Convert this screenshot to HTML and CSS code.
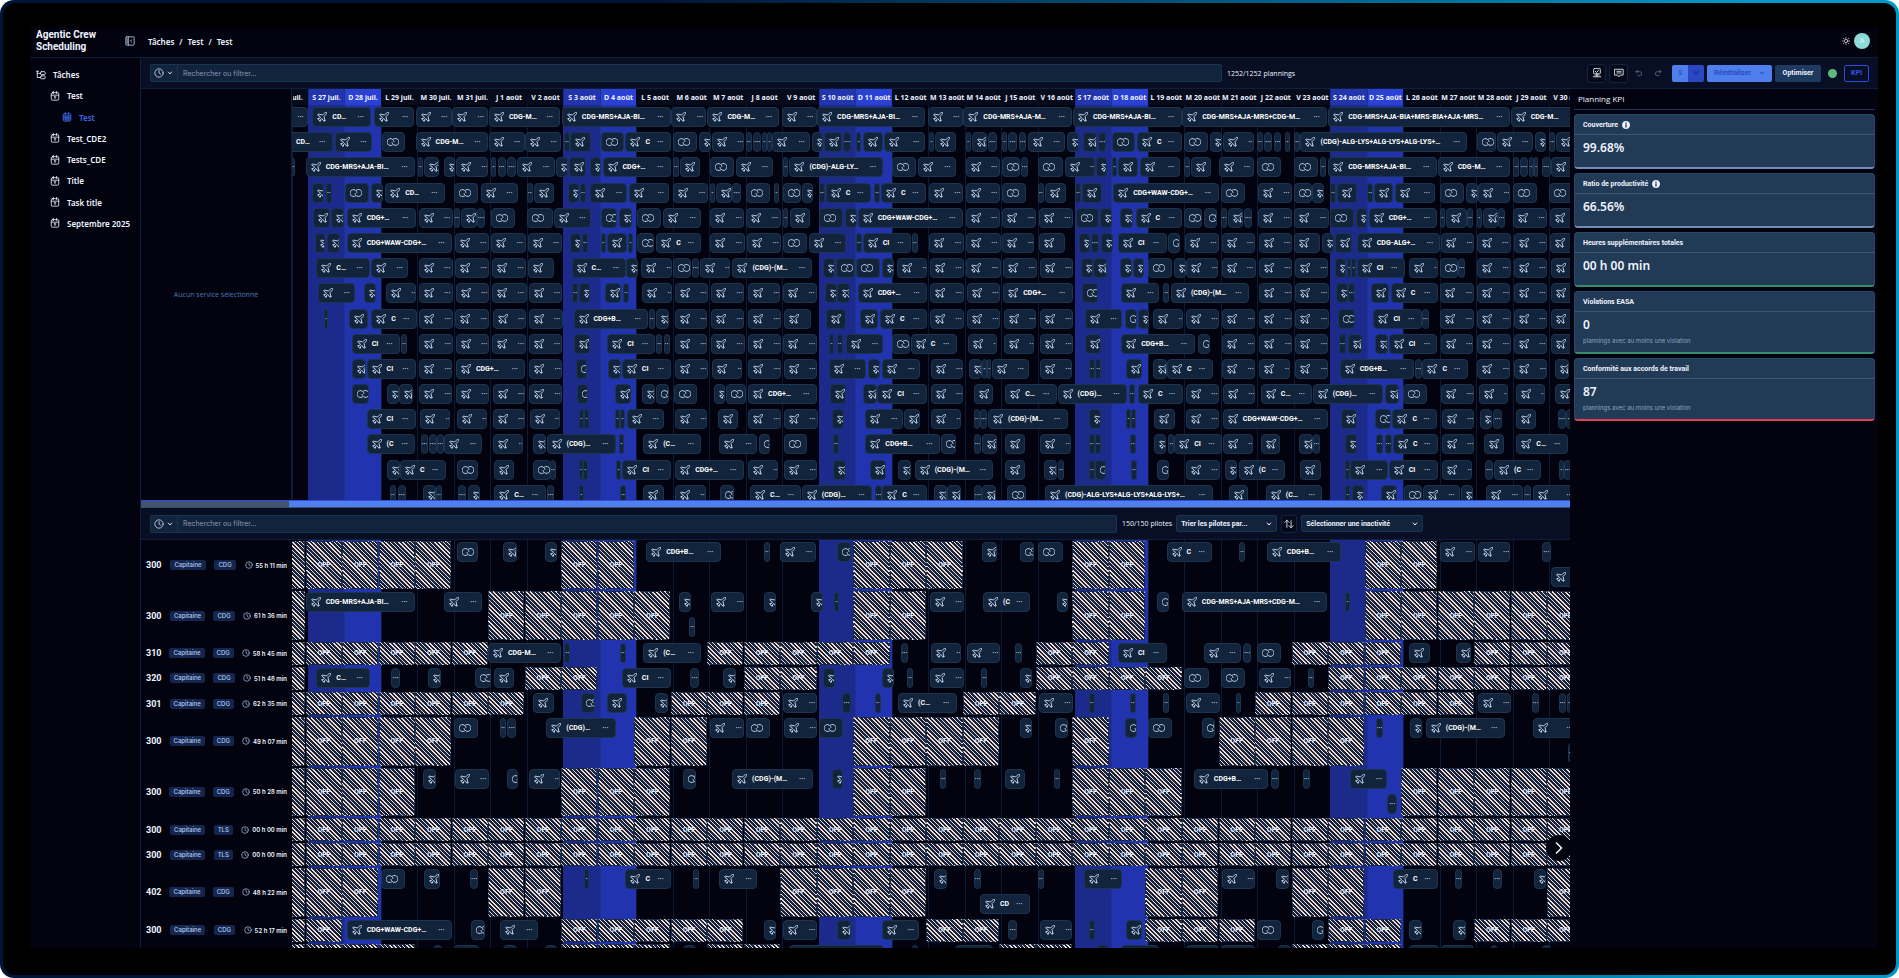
FILE: index.html
```html
<!DOCTYPE html>
<html lang="fr">
<head>
  <meta charset="UTF-8">
  <meta name="viewport" content="width=device-width, initial-scale=1">
  <title>Agentic Crew Scheduling</title>
  <link rel="stylesheet" href="styles.css">
</head>
<body>
  <!-- icon sprite -->
  <svg class="sprite" width="0" height="0" aria-hidden="true">
    <symbol id="i-plane" viewBox="2 2 20 20"><path d="M17.8 19.2 16 11l3.5-3.5C21 6 21.5 4 21 3c-1-.5-3 0-4.5 1.5L13 8 4.8 6.2c-.5-.1-.9.1-1.1.5l-.3.5c-.2.5-.1 1 .3 1.3L9 12l-2 3H4l-1 1 3 2 2 3 1-1v-3l3-2 3.5 5.3c.3.4.8.5 1.3.3l.5-.2c.4-.3.6-.7.5-1.2z"/></symbol>
    <symbol id="i-rings" viewBox="0 0 24 20"><path d="M11 16A7 7 0 1 1 14 9"/><path d="M13 4a7 7 0 1 1-3 7"/></symbol>
    <symbol id="i-clock" viewBox="0 0 24 24"><circle cx="12" cy="12" r="10"/><path d="M12 6v6l4 3"/></symbol>
    <symbol id="i-down" viewBox="0 0 24 24"><path d="M5 8l7 8 7-8"/></symbol>
    <symbol id="i-cal" viewBox="0 0 24 24"><rect x="3" y="4" width="18" height="18" rx="3"/><path d="M3 10h18M8 1v5M16 1v5M12 14v4M10 14h4"/></symbol>
    <symbol id="i-calgrid" viewBox="0 0 24 24"><rect x="3" y="4" width="18" height="18" rx="3"/><path d="M3 9h18M3 13h18M3 17h18M8 1v5M16 1v5M8 10v11M12 10v11M16 10v11"/></symbol>
    <symbol id="i-tree" viewBox="0 0 24 24"><path d="M1 3h5M3 3v15h8M3 8h8"/><rect x="11" y="4" width="11" height="7" rx="2"/><rect x="11" y="14" width="11" height="7" rx="2"/></symbol>
    <symbol id="i-panel" viewBox="0 0 24 24"><rect x="2" y="2" width="20" height="20" rx="2"/><path d="M8 2v20M5 6v12M16 9l-3 3 3 3"/></symbol>
    <symbol id="i-server" viewBox="0 0 24 24"><rect x="4" y="1" width="16" height="13" rx="2"/><path d="M8 8l3 3 5-6M7 17h10M12 14v7M3 21h18"/></symbol>
    <symbol id="i-msg" viewBox="0 0 24 24"><path d="M2 3h20v14h-7l-3 4-3-4H2zM7 8h10M7 12h10"/></symbol>
    <symbol id="i-undo" viewBox="0 0 24 24"><path d="M8 3 3 8l5 5M3 8h11a6 6 0 0 1 0 12H9"/></symbol>
    <symbol id="i-redo" viewBox="0 0 24 24"><path d="M16 3l5 5-5 5M21 8H10a6 6 0 0 0 0 12h5"/></symbol>
    <symbol id="i-swap" viewBox="0 0 24 24"><path d="M7 20V3M2 8l5-5 5 5M17 4v17M12 16l5 5 5-5"/></symbol>
    <symbol id="i-sun" viewBox="0 0 24 24"><circle cx="12" cy="12" r="5"/><path d="M12 1v3M12 20v3M1 12h3M20 12h3M4 4l2 2M18 18l2 2M20 4l-2 2M6 18l-2 2"/></symbol>
    <symbol id="i-next" viewBox="0 0 24 24"><path d="M7 2l10 10L7 22"/></symbol>
    <symbol id="i-info" viewBox="0 0 24 24"><circle cx="12" cy="12" r="11" fill="currentColor"/><path d="M12 11v7M12 6v1" stroke="#223b57" stroke-width="4"/></symbol>
  </svg>

  <div class="frame">
    <div class="screen">
      <div class="app">
        <header class="header">
          <h1 class="brand">Agentic Crew Scheduling</h1>
          <button class="icon-btn collapse" aria-label="Réduire le menu"><svg class="icon icon-md"><use href="#i-panel"/></svg></button>
          <nav class="crumbs"><a href="#">Tâches</a><span>/</span><a href="#">Test</a><span>/</span><a href="#">Test</a></nav>
          <div class="account">
            <button class="icon-btn" aria-label="Thème"><svg class="icon icon-sm"><use href="#i-sun"/></svg></button>
            <span class="avatar">A</span>
          </div>
        </header>

        <aside class="sidebar">
          <ul class="menu">
            <li><a class="root" href="#"><svg class="icon icon-md"><use href="#i-tree"/></svg>Tâches</a></li>
            <li><a href="#"><svg class="icon icon-md"><use href="#i-cal"/></svg>Test</a></li>
            <li><a class="child active" href="#"><svg class="icon icon-md"><use href="#i-calgrid"/></svg>Test</a></li>
            <li><a href="#"><svg class="icon icon-md"><use href="#i-cal"/></svg>Test_CDE2</a></li>
            <li><a href="#"><svg class="icon icon-md"><use href="#i-cal"/></svg>Tests_CDE</a></li>
            <li><a href="#"><svg class="icon icon-md"><use href="#i-cal"/></svg>Title</a></li>
            <li><a href="#"><svg class="icon icon-md"><use href="#i-cal"/></svg>Task title</a></li>
            <li><a href="#"><svg class="icon icon-md"><use href="#i-cal"/></svg>Septembre 2025</a></li>
          </ul>
        </aside>

        <main class="main">
          <div class="toolbar toolbar-top">
            <div class="search">
              <button class="search-mode" aria-label="Filtre horaire"><svg class="icon icon-md"><use href="#i-clock"/></svg><svg class="icon icon-xs"><use href="#i-down"/></svg></button>
              <input type="text" placeholder="Rechercher ou filtrer..." aria-label="Rechercher un planning">
            </div>
            <span class="count">1252/1252 plannings</span>
            <div class="tools">
              <button class="square" aria-label="Sauvegarder"><svg class="icon icon-md"><use href="#i-server"/></svg></button>
              <button class="square" aria-label="Commentaires"><svg class="icon icon-md"><use href="#i-msg"/></svg></button>
              <button class="icon-btn history" aria-label="Annuler"><svg class="icon icon-sm"><use href="#i-undo"/></svg></button>
              <button class="icon-btn history" aria-label="Rétablir"><svg class="icon icon-sm"><use href="#i-redo"/></svg></button>
              <div class="toggle"><button class="on">S</button><button>M</button></div>
              <button class="btn btn-reset">Réinitialiser<svg class="icon icon-xs"><use href="#i-down"/></svg></button>
              <button class="btn btn-optim">Optimiser</button>
              <span class="dot"></span>
              <button class="btn btn-kpi">KPI</button>
            </div>
          </div>

          <div class="workspace">
            <div class="panes">
              <section class="pane">
                <div class="side empty">Aucun service sélectionné</div>
                <div class="timeline with-head">
                  <div class="days head" id="head"></div>
                  <div class="days back" id="back-top"></div>
                  <div class="rows rows-top" id="rows-top"></div>
                </div>
              </section>
              <div class="splitter"></div>
              <div class="toolbar">
                <div class="search search-pilots">
                  <button class="search-mode" aria-label="Filtre horaire"><svg class="icon icon-md"><use href="#i-clock"/></svg><svg class="icon icon-xs"><use href="#i-down"/></svg></button>
                  <input type="text" placeholder="Rechercher ou filtrer..." aria-label="Rechercher un pilote">
                </div>
                <span class="count">150/150 pilotes</span>
                <div class="picker picker-sort">
                  <select aria-label="Tri"><option>Trier les pilotes par...</option></select>
                  <svg class="icon icon-xs"><use href="#i-down"/></svg>
                </div>
                <button class="square small" aria-label="Inverser le tri"><svg class="icon icon-md"><use href="#i-swap"/></svg></button>
                <div class="picker picker-idle">
                  <select aria-label="Inactivité"><option>Sélectionner une inactivité</option></select>
                  <svg class="icon icon-xs"><use href="#i-down"/></svg>
                </div>
              </div>
              <section class="pane">
                <div class="side pilots" id="pilots"></div>
                <div class="timeline">
                  <div class="days back" id="back-bottom"></div>
                  <div class="rows rows-bottom" id="rows-bottom"></div>
                  <button class="next" aria-label="Suivant"><svg class="icon icon-lg"><use href="#i-next"/></svg></button>
                </div>
              </section>
            </div>

            <aside class="kpis">
              <h2>Planning KPI</h2>
              <article class="kpi">
                <h3>Couverture <svg class="icon icon-sm"><use href="#i-info"/></svg></h3>
                <p class="value">99.68%</p>
              </article>
              <article class="kpi">
                <h3>Ratio de productivité <svg class="icon icon-sm"><use href="#i-info"/></svg></h3>
                <p class="value">66.56%</p>
              </article>
              <article class="kpi good">
                <h3>Heures supplémentaires totales</h3>
                <p class="value">00 h 00 min</p>
              </article>
              <article class="kpi good">
                <h3>Violations EASA</h3>
                <p class="value">0</p>
                <p class="note">plannings avec au moins une violation</p>
              </article>
              <article class="kpi bad">
                <h3>Conformité aux accords de travail</h3>
                <p class="value">87</p>
                <p class="note">plannings avec au moins une violation</p>
              </article>
            </aside>
          </div>
        </main>
      </div>
    </div>
  </div>
  <script src="app.js"></script>
</body>
</html>
```
FILE: styles.css
```css
* {
  box-sizing: border-box;
}
body {
  margin: 0;
  background: #fff;
  color: #eef3ff;
  font-family: "Noto Sans", sans-serif;
  font-size: 8px;
}
h1, h2, h3, p, ul {
  margin: 0;
  padding: 0;
}
a {
  color: inherit;
  text-decoration: none;
}
button, input, select {
  font-family: Roboto, sans-serif;
  font-size: 7px;
  color: inherit;
  margin: 0;
  padding: 0;
  border: 0;
  background: none;
}
button {
  cursor: pointer;
}
.sprite {
  display: block;
}

/* icons */
.icon {
  flex: none;
  width: 10px;
  height: 10px;
  fill: none;
  stroke: currentColor;
  stroke-width: 2;
  stroke-linecap: round;
  stroke-linejoin: round;
}
.icon-xs {
  width: 6px;
  height: 6px;
  stroke-width: 4;
}
.icon-sm {
  width: 8px;
  height: 8px;
}
.icon-lg {
  width: 12px;
  height: 12px;
  stroke-width: 3;
}
.icon-btn {
  display: flex;
}

/* device frame */
.frame {
  height: 100vh;
  padding: 3px;
  border-radius: 14px;
  background: linear-gradient(to right, #001638 35%, #0098c6 92%);
}
.screen {
  height: 100%;
  padding: 24px 18px 27px 27px;
  border-radius: 12px;
  background: #000;
}
.app {
  height: 100%;
  display: grid;
  grid-template: 31px minmax(0, 1fr) / 111px minmax(0, 1fr);
  background: #02030e;
}

/* header */
.header {
  grid-column: 1 / -1;
  display: flex;
  align-items: center;
  padding: 0 8px 2px 6px;
  border-bottom: 1px solid #0d1f3d;
}
.brand {
  width: 89px;
  font: 700 10px/12px Roboto, sans-serif;
}
.collapse {
  color: #b9cbe8;
}
.crumbs {
  display: flex;
  gap: 5px;
  margin-left: 13px;
  font-weight: 600;
}
.account {
  display: flex;
  align-items: center;
  gap: 4px;
  margin-left: auto;
}
.avatar {
  width: 16px;
  height: 16px;
  border-radius: 50%;
  background: #8cd9da;
  font-size: 7px;
  line-height: 16px;
  text-align: center;
}

/* sidebar */
.sidebar {
  border-right: 1px solid #0d1f3d;
}
.menu {
  display: grid;
  grid-auto-rows: 1fr;
  height: 170px;
  margin-top: 6px;
  list-style: none;
  font-weight: 600;
}
.menu a {
  display: flex;
  align-items: center;
  gap: 7px;
  height: 100%;
  padding-left: 20px;
  white-space: nowrap;
}
.menu .root {
  padding-left: 6px;
}
.menu .child {
  padding-left: 32px;
}
.menu .active {
  color: #3f66e8;
}

/* toolbar */
.main {
  display: flex;
  flex-direction: column;
  min-width: 0;
}
.toolbar {
  display: flex;
  align-items: center;
  gap: 4px;
  height: 32px;
  padding: 0 9px;
  background: #080e24;
  border-bottom: 1px solid #0d1f3d;
}
.toolbar-top {
  height: 31px;
  flex: none;
}
.search {
  display: flex;
  flex: 0 1 1072px;
  height: 18px;
  border: 1px solid #193453;
  border-radius: 2px;
  background: #12243b;
}
.search-pilots {
  flex-basis: 967px;
}
.search-mode {
  display: flex;
  align-items: center;
  gap: 3px;
  width: 27px;
  padding-left: 3px;
  border-right: 1px solid #193453;
  color: #c9d8ef;
}
.search input {
  flex: 1;
  min-width: 0;
  padding: 0 5px;
  outline: 0;
  font-family: Inter, sans-serif;
}
.search input::placeholder {
  color: #8599b8;
}
.count {
  margin-left: 1px;
  font-family: "Open Sans", sans-serif;
  font-size: 7px;
  white-space: nowrap;
}
.tools {
  display: flex;
  align-items: center;
  gap: 3px;
  margin-left: auto;
}
.square {
  display: flex;
  align-items: center;
  justify-content: center;
  width: 19px;
  height: 19px;
  border: 1px solid #14243d;
  border-radius: 3px;
  background: #050918;
}
.square.small {
  width: 16px;
  height: 18px;
}
.history {
  width: 16px;
  justify-content: center;
  color: #71849f;
}
.toggle {
  display: flex;
  margin-left: 3px;
  border-radius: 2px;
  overflow: hidden;
}
.toggle button {
  width: 16px;
  height: 17px;
  background: #2a48c4;
  color: #18329c;
}
.toggle .on {
  background: #4f7fec;
  color: #2546c4;
}
.btn {
  height: 17px;
  border-radius: 2px;
  font-weight: 700;
}
.btn-reset {
  display: flex;
  align-items: center;
  justify-content: space-between;
  width: 65px;
  padding: 0 7px;
  background: #4f7fec;
  color: #2546c4;
  font-weight: 500;
}
.btn-optim {
  width: 46px;
  background: #1f3a60;
}
.dot {
  width: 9px;
  height: 9px;
  margin: 0 4px;
  border-radius: 50%;
  background: #5fb87d;
}
.btn-kpi {
  width: 25px;
  border: 1px solid #2a4be0;
  color: #2f55f0;
}
.picker {
  display: grid;
  align-items: center;
  height: 17px;
  border: 1px solid #193453;
  border-radius: 2px;
  background: #12243b;
}
.picker-sort {
  width: 101px;
}
.picker-idle {
  width: 122px;
}
.toolbar .picker,
.toolbar .square {
  flex: none;
}
.picker select,
.picker .icon {
  grid-area: 1 / 1;
}
.picker select {
  appearance: none;
  width: 100%;
  padding: 0 4px;
  font-weight: 700;
}
.picker .icon {
  justify-self: end;
  margin-right: 4px;
  pointer-events: none;
}

/* workspace */
.workspace {
  flex: 1;
  min-height: 0;
  display: grid;
  grid-template-columns: minmax(0, 1fr) 308px;
}
.panes {
  display: grid;
  grid-template-rows: 411px 8px 32px minmax(0, 1fr);
  min-height: 0;
}
.pane {
  display: grid;
  grid-template: minmax(0, 1fr) / 151px minmax(0, 1fr);
  min-height: 0;
  overflow: hidden;
}
.splitter {
  border-top: 1px solid #2f4be0;
  border-bottom: 1px solid #3a4d70;
  background: linear-gradient(to right, #44546f 148px, #4f80ee 148px);
}
.side {
  overflow: hidden;
}
.empty {
  display: flex;
  align-items: center;
  justify-content: center;
  border-right: 1px solid #0d1f3d;
  color: #4a78b8;
  font-family: "Open Sans", sans-serif;
  font-size: 7px;
}

/* timeline */
.timeline {
  display: grid;
  grid-template: minmax(0, 1fr) / minmax(0, 1fr);
  overflow: hidden;
  position: relative;
}
.timeline.with-head {
  grid-template-rows: 16px minmax(0, 1fr);
}
.days {
  display: grid;
  grid-template-columns: 43fr repeat(34, 100fr) 57fr;
}
.head {
  background: #060b1c;
}
.day {
  min-width: 0;
  overflow: hidden;
  border-left: 1px solid #0b1b36;
  display: flex;
  justify-content: center;
  align-items: center;
  font-size: 7px;
  font-weight: 700;
  white-space: nowrap;
}
.head .day {
  border-color: transparent;
}
.head .day:first-child {
  justify-content: flex-end;
  padding-right: 5px;
}
.head .day:last-child {
  justify-content: flex-start;
  padding-left: 3px;
}
.day.sat {
  background: #1c2a8c;
  border-color: #1c2a8c;
}
.day.sun {
  background: #2233b0;
  border-color: #1b3390;
}
.head .sat {
  background: #2335ac;
}
.head .sun {
  background: #2b40d4;
}
.back,
.rows {
  grid-column: 1;
  grid-row: -2 / -1;
}
.rows {
  display: grid;
  align-self: start;
}
.rows-top {
  height: 403px;
  grid-template-rows: repeat(16, 1fr);
}
.rows-bottom,
.pilots {
  height: 428px;
  display: grid;
  grid-template-rows: repeat(17, 1fr);
}
.row {
  position: relative;
  min-height: 0;
}
.tall {
  grid-row: span 2;
}

/* bars sit at their start time along the row */
.bar {
  position: absolute;
  top: 2px;
  height: 20px;
  display: flex;
  align-items: center;
  padding: 0 4px;
  border: 1px solid #1b3550;
  border-radius: 4px;
  background: #12243b;
  color: #bccfe9;
  overflow: hidden;
}
.bar.lane2 {
  top: 27px;
}
.bar .more {
  flex: none;
  width: 7px;
  margin-left: auto;
  padding-left: 10px;
  box-sizing: content-box;
  font: 700 7px/8px Roboto, sans-serif;
  text-align: center;
}
.bar.named {
  padding-right: 6px;
}
.bar.named .more {
  padding-left: 0;
}
.bar.tiny {
  justify-content: center;
  padding: 0;
}
.bar.tiny .more {
  margin: 0;
  padding: 0;
}
.bar .label {
  margin-left: 5px;
  color: #fff;
  font: 700 7px/10px Roboto, sans-serif;
  white-space: nowrap;
}
.bar .rings {
  width: 12px;
}
.off {
  position: absolute;
  top: 1px;
  bottom: 1px;
  display: flex;
  align-items: center;
  justify-content: center;
  border: 1px dashed #16304d;
  border-radius: 2px;
  background: repeating-linear-gradient(45deg, #f3dccb 0 1px, #14223f 1px 3px);
  color: #e2edff;
  font: 700 7px/8px Roboto, sans-serif;
}
.next {
  position: absolute;
  right: -2px;
  bottom: 87px;
  display: flex;
  align-items: center;
  justify-content: center;
  width: 26px;
  height: 26px;
  border-radius: 50%;
  background: #02030e;
  color: #fff;
}

/* pilots */
.pilot {
  display: flex;
  align-items: center;
  justify-content: space-between;
  padding: 0 5px;
  min-height: 0;
  font-family: Inter, sans-serif;
}
.pilot b {
  font: 700 9px Roboto, sans-serif;
}
.tag {
  padding: 0 4px;
  border-radius: 2px;
  background: #14264e;
  color: #b4ccf2;
  font-size: 6px;
  font-weight: 500;
  line-height: 10px;
}
.hours {
  display: flex;
  align-items: center;
  gap: 3px;
  font-size: 6px;
  font-weight: 600;
}
.hours .icon {
  color: #b4ccf2;
}

/* kpi */
.kpis {
  padding: 0 3px 0 4px;
}
.kpis h2 {
  height: 21px;
  margin-bottom: 4px;
  padding-left: 4px;
  border-bottom: 1px solid #1d3450;
  font: 400 8px/20px "Open Sans", sans-serif;
}
.kpi {
  height: 55px;
  margin-bottom: 4px;
  border: 1px solid #27486a;
  border-bottom: 2px solid #7489b4;
  border-radius: 4px;
  background: #213a56;
}
.kpi:has(.note) {
  height: 63px;
}
.kpi h3 {
  display: flex;
  align-items: center;
  gap: 4px;
  height: 20px;
  padding-left: 8px;
  border-bottom: 1px solid #3a5775;
  font: 700 7px Roboto, sans-serif;
}
.kpi .value {
  padding-left: 8px;
  font-size: 12px;
  font-weight: 600;
  line-height: 26px;
}
.kpi .note {
  padding-left: 8px;
  color: #8fa3c0;
  font: 400 6px/6px Inter, sans-serif;
}
.kpi.good {
  border-bottom-color: #3a8a6e;
}
.kpi.bad {
  border-bottom-color: #e2405a;
}
```
FILE: app.js
```js
// The visible window is 35 days long; times are given in ticks from its left edge.
const WINDOW = 3836;
const DAY = WINDOW / 35;
const OFF_START = 41;

const LETTERS = ['S', 'D', 'L', 'M', 'M', 'J', 'V'];

// "start,end,label" per bar, a leading "o" marks a ground duty
const PLANNINGS = [
  '-60,48 61,238,CD… 245,365 371,479 481,589 591,805,CDG-M… 810,1137,CDG-MRS+AJA-BI… 1139,1244 1247,1463,CDG-M… 1470,1575 1576,1901,CDG-MRS+AJA-BI… 1908,2013 2015,2342,CDG-MRS+AJA-M… 2344,2670,CDG-MRS+AJA-BI… 2672,3107,CDG-MRS+AJA-MRS+CDG-M… 3110,3656,CDG-MRS+AJA-BIA+MRS-BIA+AJA-MRS… 3658,3880,CDG-M…',
  '-48,122,CD… 129,240 o269,340 371,588,CDG-M… 590,698 700,807 817,833 835,897 o926,997 1001,1137,C o1144,1216 1223,1257 1260,1356 1364,1380 1384,1408 1411,1425 1425,1440 1442,1555 1561,1594 1597,1650 1653,1678 1693,1709 1713,1773 1777,1899 1912,1927 1931,1993 2022,2037 2041,2087 2088,2115 2131,2145 2150,2175 2183,2202 2210,2320 2327,2361 2373,2417 2419,2444 o2460,2531 2536,2670,C o2678,2750 2754,2792 2794,2889 2898,2914 2917,2943 2947,2969 2980,2997 3007,3025 3027,3528,(CDG)-ALG-LYS+ALG-LYS+ALG-LYS+… o3556,3614 3616,3726 3731,3764 3773,3791 3795,3860',
  '-15,10 41,369,CDG-MRS+AJA-BI… 378,394 397,442 456,490 492,588 597,613 617,641 646,672 676,788 792,827 830,881 893,929 932,1137,CDG+… 1144,1163 1166,1225 o1254,1326 1332,1445 1474,1490 1493,1775,(CDG)-ALG-LY… o1802,1873 1880,1993 2022,2124 o2130,2185 2188,2208 o2240,2313 2319,2411 2414,2447 2460,2475 2479,2540 2545,2664 2678,2695 2699,2759 2781,2889 o2897,2969 o3007,3079 3086,3103 3110,3436,CDG-MRS+AJA-BI… 3439,3655,CDG-M… 3664,3682 3686,3709 3713,3727 3727,3741 3751,3778 3780,3870',
  '61,95 102,121 o158,231 236,273 280,459,CD… o487,559 566,678 706,724 726,787 828,862 865,881 894,1007 1012,1132 1145,1248 1254,1271 1274,1321 1322,1347 o1364,1435 1446,1462 o1474,1528 1531,1563 1583,1599 1602,1737,C 1747,1765 1768,1903,C 1912,2015 2022,2124 o2131,2203 2240,2257 2261,2322 2351,2367 2371,2431 2465,2781,CDG+WAW-CDG+… o2788,2860 2899,3002 o3008,3061 3063,3097 3116,3133 3136,3197 3226,3244 3247,3306 3312,3432 o3446,3517 3523,3559 3560,3657 o3664,3736 o3774,3846',
  '64,115 118,155 164,371,CDG+… 380,482 486,505 507,554 554,580 o597,669 o706,782 785,897 o926,975 981,1021 o1036,1107 1114,1228 1255,1358 1364,1468 1474,1490 1494,1554 o1583,1653 1661,1695 1698,2013,CDG+WAW-CDG+… 2022,2124 2132,2233 2242,2344 o2352,2421 2425,2461 2485,2525 2532,2672,C o2678,2731 o2737,2776 2788,2805 2808,2856 2857,2881 2900,3002 3009,3112 o3116,3188 3194,3228 3232,3438,CDG+… 3445,3462 3465,3527 3527,3545 3556,3572 3575,3619 3621,3640 3665,3767 3775,3877',
  '68,100 104,143 164,480,CDG+WAW-CDG+… 488,592 598,702 707,811 833,868 870,888 926,942 946,1005 1008,1025 o1036,1087 1093,1228,C 1255,1359 1366,1468 o1474,1545 1552,1664 1693,1710 1713,1858,CI 1861,1880 1913,2017 2023,2127 2132,2227 2242,2320 2361,2395 2397,2422 2427,2465 2479,2625,CI o2628,2665 2680,2782 2790,2891 2901,3002 3009,3087 3092,3127 3130,3182 3196,3447,CDG-ALG+… 3449,3547 3556,3658 3667,3768 3777,3879',
  '73,235,C… 238,349 380,483 490,592 600,702 707,787 839,1004,C… 1004,1040 1047,1140 o1145,1198 1202,1222 1224,1315 1322,1562,(CDG)-(M… 1595,1630 o1632,1690 o1693,1765 1770,1807 1817,1906 1915,2017 2024,2127 2135,2237 2244,2343 2369,2403 2405,2445 2485,2522 2523,2558 o2569,2640 2647,2683 2684,2780 2790,2893 2902,3002 3011,3111 3130,3165 3166,3179 3179,3193 3196,3340,CI 3352,3440 o3446,3500 3501,3520 3557,3660 3667,3767 3778,3880',
  '78,190 217,253 283,373 381,482 491,592 601,704 710,810 840,857 860,896 939,989 993,1012 1051,1140 1149,1250 1258,1356 1369,1465 1474,1577 1601,1635 1637,1674 1698,1906,CDG+… 1916,2017 2025,2125 2135,2343,CDG+… o2370,2420 2488,2602 2613,2632 2638,2872,(CDG)-(M… 2903,3003 3012,3112 3135,3171 3171,3190 3240,3294 3298,3439,C 3447,3549 3558,3657 3667,3767 3778,3880',
  '95,109 172,227 238,374,C 382,482 490,592 602,702 710,812 845,1069,CDG+B… 1073,1091 1093,1132 1149,1247 1258,1356 1369,1467 1476,1558 1602,1663 1706,1759 1765,1905,C 1915,2017 2026,2125 2136,2232 2244,2343 2379,2491 o2500,2536 2538,2573 2585,2673 2683,2783 2792,2891 2903,3002 3012,3112 o3139,3190 3246,3391,CI 3393,3414 3447,3549 3558,3658 3667,3768 3778,3880',
  '179,324,CI 326,346 382,483 491,592 601,703 710,811 847,896 946,1091,CI 1092,1110 1118,1136 1149,1246 1258,1359 1369,1468 1475,1576 1611,1628 1637,1655 1662,1775 o1802,1856 1857,1995,C 2029,2117 2137,2226 2245,2343 2381,2429 2489,2709,CDG+B… o2719,2755 2792,2890 2904,3001 3012,3110 3144,3165 3170,3212 3250,3289 3292,3438,CI 3448,3546 3558,3660 3667,3767 3778,3880',
  '181,221 224,372,CI 382,481 492,700,CDG+… 712,810 o852,887 948,988 990,1138,CI 1149,1250 1261,1351 1370,1467 1476,1576 1611,1723 1728,1765 1771,1884 1917,2014 2033,2070 2071,2085 2085,2099 2100,2213 2245,2342 2391,2409 2409,2428 2502,2550 2585,2625 2626,2763,C 2792,2892 2904,2995 3012,3109 3145,3367,CDG+B… 3372,3392 3393,3529,C 3558,3657 3669,3766 3790,3833',
  'o181,232 285,321 322,364 382,480 492,591 602,700 711,810 o856,888 968,1018 1052,1091 o1092,1132 o1147,1217 1267,1301 o1304,1363 1369,1575,CDG+… 1614,1662 1715,1755 1757,1905,CI 1917,2014 2046,2105 2141,2295,C… 2298,2506,(CDG)… 2513,2531 2539,2673,C 2683,2782 2794,2892 2908,3062,C… 3064,3274,(CDG)… 3281,3322 o3336,3408 3450,3549 3562,3651 3673,3762 3792,3850',
  '224,371,CI 385,475 494,584 602,699 713,804 861,875 875,893 970,985 985,1001 1005,1117 1150,1247 1279,1339 1369,1468 1476,1578 1620,1656 1721,1833 1837,1885 1918,2008 2047,2066 2066,2085 2089,2328,(CDG)-(M… 2393,2429 2504,2519 2519,2533 2588,2649 2683,2781 2794,3109,CDG+WAW-CDG+… 3148,3196 o3252,3300 3303,3437,C 3451,3549 3566,3603 3605,3631 3675,3733 3800,3823 3825,3850',
  '224,370,(C 388,408 410,434 436,456 457,569 604,693 723,762 764,972,(CDG)… 981,998 1054,1228,(C… 1282,1396 o1403,1436 o1477,1545 1624,1642 1721,1945,CDG+B… o1948,1994 2048,2068 2070,2116 2141,2199 2246,2338 2393,2410 2410,2428 2516,2534 2588,2623 2628,2646 2648,2791,CI 2794,2885 2908,2965 3023,3065 3066,3085 3160,3196 3253,3276 3282,3301 3305,3439,C 3451,3549 3579,3639 3675,3829,C…',
  '286,323 324,461,C o496,559 607,665 o724,776 775,793 861,874 874,887 971,989 992,1138,CI 1150,1356,CDG+… 1370,1460 1477,1576 1625,1662 1734,1783 1818,1859 1869,2105,(CDG)-(M… 2141,2199 2256,2296 2298,2317 2393,2409 o2410,2442 2518,2536 o2595,2633 2683,2784 2800,2836 2842,2982,(C 3025,3088 3162,3175 3177,3289 3292,3439,CI 3452,3542 3582,3604 3608,3748,(C 3802,3818 3818,3840',
  '294,313 317,341 394,432 432,450 497,523 529,564 607,761,C… 765,785 861,876 985,1002 1054,1117 1149,1242 o1284,1328 1375,1529,C… 1530,1741,(CDG)… 1751,1770 1772,1905,C 1928,1965 1966,2008 2048,2070 2072,2113 o2145,2203 2260,2763,(CDG)-ALG-LYS+ALG-LYS+ALG-LYS+… 2812,2871 2923,3092,(C… 3161,3175 3181,3217 3269,3318 o3337,3392 3394,3506 3508,3544 3583,3696 3699,3720 3724,3860',
];

// off: ranges of day indexes, 0 is the first Saturday
const PILOTS = [
  { id: 300, base: 'CDG', hours: '55 h 11 min', tall: true, off: '-1,3 7,8 15,17 21,22 29,30',
    bars: 'o496,559 633,674 760,796 1063,1287,CDG+B… 1417,1435 1466,1574 o1637,1678 2071,2117 o2185,2227 o2239,2313 2625,2762,C 2842,2861 2926,3148,CDG+B… 3447,3550 3559,3657 3751,3779', lane2: '3778,3880' },
  { id: 300, base: 'CDG', hours: '61 h 36 min', tall: true, off: '-1,-1 5,9 15,16 21,22 29,34',
    bars: '41,369,CDG-MRS+AJA-BI… 455,570 1161,1198 1259,1356 1418,1454 1559,1594 1628,1642 1915,2017 2074,2215,(C 2296,2330 o2595,2633 2671,3108,CDG-MRS+AJA-MRS+CDG-M… 3162,3175', lane2: '1191,1209' },
  { id: 310, base: 'CDG', hours: '58 h 45 min', off: '-1,4 11,15 20,21 27,29 32,34',
    bars: '588,807,CDG-M… 815,833 985,1003 1054,1228,(C… 1828,1848 1918,2008 2026,2124 2170,2191 2479,2625,CI 2737,2848 2854,2880 o2897,2970 3354,3417 3493,3538' },
  { id: 320, base: 'CDG', hours: '51 h 48 min', off: '-1,-1 6,7 12,13 20,23 28,34',
    bars: '73,235,C… 298,325 409,446 o550,597 607,665 990,1138,CI 1194,1222 1294,1332 1595,1631 1770,1807 1847,1863 1915,2016 2067,2086 2185,2221 o2678,2751 o2788,2860 2902,3000 3051,3068' },
  { id: 301, base: 'CDG', hours: '62 h 35 min', off: '-1,5 10,12 18,19 26,31',
    bars: '724,787 o867,910 944,1005 1090,1129 1475,1577 1651,1678 1750,1769 1819,1995,(C… 2242,2343 2393,2410 2516,2534 2614,2633 2683,2784 2833,2848 3559,3658 3722,3742 3804,3824 3826,3845' },
  { id: 300, base: 'CDG', hours: '49 h 07 min', tall: true, off: '-1,3 9,10 15,18 21,21 25,28',
    bars: 'o487,559 625,642 646,673 763,972,(CDG)… 1255,1357 o1363,1435 1477,1576 o1583,1654 2185,2221 o2290,2330 o2500,2536 o2568,2640 o2732,2769 3253,3275 3355,3391 3403,3640,(CDG)-(M… 3724,3860', lane2: '3829,3850' },
  { id: 300, base: 'CDG', hours: '50 h 28 min', tall: true, off: '-1,2 7,9 15,16 21,23 30,34',
    bars: '394,431 488,592 o646,679 712,803 o1175,1214 1321,1563,(CDG)-(M… 1620,1655 1944,1963 2047,2068 2141,2199 2287,2305 2707,2929,CDG+B… 2938,2962 3034,3057 3177,3288', lane2: '3288,3316' },
  { id: 300, base: 'TLS', hours: '00 h 00 min', off: '-1,34', bars: '' },
  { id: 300, base: 'TLS', hours: '00 h 00 min', off: '-1,34', bars: '' },
  { id: 402, base: 'CDG', hours: '48 h 22 min', tall: true, off: '-1,1 5,6 13,16 23,24 27,28 34,34',
    bars: 'o268,340 397,443 535,559 875,893 1001,1138,C 1203,1222 1282,1396 1928,1965 2047,2068 2239,2258 2378,2492 2791,2891 2953,2992 3305,3440,C 3492,3511 3604,3631 3728,3765', lane2: '2065,2215,CD' },
  { id: 300, base: 'CDG', hours: '52 h 17 min', off: '-1,0 7,11 17,18 23,25 28,29 32,34',
    bars: '164,480,CDG+WAW-CDG+… o536,579 625,738 1418,1454 1475,1577 1637,1677 1770,1883 2150,2176 2245,2342 2393,2410 2503,2550 o2897,2970 o3062,3098 3352,3392 3484,3523' },
  { off: '-1,2 7,9 11,12 19,20 27,29',
    bars: '424,451 487,560 633,674 760,796 1175,1214 1491,1777 1860,1879 1989,2104 2415,2448 2488,2602 2682,2782 2788,2892 2960,2998 3352,3442 3449,3547 3599,3617 3751,3779' },
];

const pct = (ticks) => (ticks / WINDOW * 100).toFixed(3) + '%';
const place = (start, end) => `style="left:${pct(start)};width:${pct(end - start)}"`;

function bar(text, lane) {
  const ground = text[0] === 'o';
  const [start, end, label] = text.replace('o', '').split(',');
  const size = end - start;
  const more = '<span class="more">···</span>';
  let kind = '';
  let inner;
  if (size < 30) {
    kind = 'tiny';
    inner = more;
  } else if (ground) {
    inner = '<svg class="icon rings"><use href="#i-rings"/></svg>';
  } else if (label) {
    kind = 'named';
    inner = `<svg class="icon"><use href="#i-plane"/></svg><span class="label">${label}</span>${more}`;
  } else {
    inner = '<svg class="icon"><use href="#i-plane"/></svg>' + (size > 85 ? more : '');
  }
  return `<div class="bar ${kind} ${lane || ''}" ${place(start, end)}>${inner}</div>`;
}

function bars(list, lane) {
  return list ? list.split(' ').map((b) => bar(b, lane)).join('') : '';
}

function offDays(ranges) {
  let html = '';
  ranges.split(' ').forEach((range) => {
    const [from, to] = range.split(',').map(Number);
    for (let d = from; d <= to; d++) {
      const start = OFF_START + d * DAY;
      // the first day is mostly scrolled out, its text with it
      html += `<div class="off" ${place(start, start + DAY - 1)}>${d < 0 ? '' : 'OFF'}</div>`;
    }
  });
  return html;
}

function days(withText) {
  let html = `<div class="day">${withText ? 'juil.' : ''}</div>`;
  for (let i = 0; i < 35; i++) {
    const n = 27 + i;
    const text = LETTERS[i % 7] + ' ' + (n > 31 ? n - 31 + ' août' : n + ' juil.');
    const cls = i % 7 === 0 ? 'sat' : i % 7 === 1 ? 'sun' : '';
    html += `<div class="day ${cls}">${withText ? text : ''}</div>`;
  }
  return html;
}

document.getElementById('head').innerHTML = days(true);
document.getElementById('back-top').innerHTML = days(false);
document.getElementById('back-bottom').innerHTML = days(false);

document.getElementById('rows-top').innerHTML =
  PLANNINGS.map((list) => `<div class="row">${bars(list)}</div>`).join('');

document.getElementById('rows-bottom').innerHTML = PILOTS.map((p) =>
  `<div class="row ${p.tall ? 'tall' : ''}">${offDays(p.off)}${bars(p.bars)}${bars(p.lane2, 'lane2')}</div>`).join('');

document.getElementById('pilots').innerHTML = PILOTS.filter((p) => p.id).map((p) =>
  `<div class="pilot ${p.tall ? 'tall' : ''}"><b>${p.id}</b><span class="tag">Capitaine</span><span class="tag">${p.base}</span>
   <span class="hours"><svg class="icon icon-sm"><use href="#i-clock"/></svg>${p.hours}</span></div>`).join('');
```
